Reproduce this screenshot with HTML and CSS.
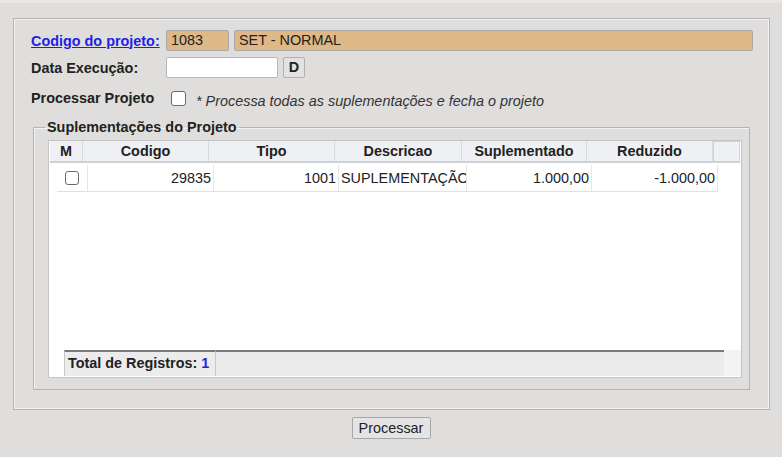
FILE: index.html
```html
<!DOCTYPE html>
<html lang="pt">
<head>
<meta charset="utf-8">
<title>Processar Projeto</title>
<link rel="stylesheet" href="styles.css">
</head>
<body>
<div class="panel">
  <div class="row row1">
    <a class="label link" href="#">Codigo do projeto:</a>
    <div class="inp inp-code">1083</div>
    <div class="inp inp-name">SET - NORMAL</div>
  </div>
  <div class="row row2">
    <span class="label">Data Execução:</span>
    <div class="inp inp-date"></div>
    <div class="btn-d">D</div>
  </div>
  <div class="row row3">
    <span class="label3">Processar Projeto</span>
    <span class="chk chk-main"></span>
    <span class="hint">* Processa todas as suplementações e fecha o projeto</span>
  </div>
  <fieldset class="group">
    <legend>Suplementações do Projeto</legend>
    <div class="grid">
      <div class="ghead">
        <div class="hc c-m">M</div>
        <div class="hc c-col">Codigo</div>
        <div class="hc c-col">Tipo</div>
        <div class="hc c-desc">Descricao</div>
        <div class="hc c-sup">Suplementado</div>
        <div class="hc c-col">Reduzido</div>
        <div class="hc c-blank"></div>
      </div>
      <div class="grow">
        <div class="dc d-m"><span class="chk chk-row"></span></div>
        <div class="dc d-col num">29835</div>
        <div class="dc d-tipo num">1001</div>
        <div class="dc d-desc">SUPLEMENTAÇÃO</div>
        <div class="dc d-sup num">1.000,00</div>
        <div class="dc d-col num">-1.000,00</div>
      </div>
      <div class="spacer"></div>
      <div class="gfoot">
        <div class="ftotal">Total de Registros: <span class="count">1</span></div>
        <div class="frest"></div>
        <div class="fside"></div>
      </div>
    </div>
  </fieldset>
</div>
<div class="actions">
  <button class="btn-main" type="button">Processar</button>
</div>
</body>
</html>
```

FILE: styles.css
```css
* { box-sizing: border-box; }
html, body { margin: 0; padding: 0; }
body {
  background: #e0dedc;
  border-top: 3px solid #e8e7e5;
  padding: 15px 0 0 13px;
  font-family: "Liberation Sans", Arial, sans-serif;
  font-size: 14.4px;
  color: #222;
  width: 782px;
  height: 457px;
  overflow: hidden;
}
.panel {
  width: 757px;
  height: 392px;
  border: 1px solid #b4b4b4;
  box-shadow: inset 1px 1px 0 #f3f3f3, inset -1px -1px 0 #f3f3f3;
  padding: 11px 0 0 17px;
}
.row { display: flex; align-items: center; }
.row1, .row2 { height: 21px; }
.row2 { margin-top: 6px; }
.label {
  width: 135px;
  font-weight: bold;
  color: #222;
}
.link { color: #1f1fe6; text-decoration: underline; }
.inp {
  height: 21px;
  border: 1px solid #a9a9a9;
  border-radius: 2px;
  padding: 0 4px;
  line-height: 19px;
  color: #222;
}
.inp-code { width: 63px; background: #deb887; }
.inp-name { width: 519px; margin-left: 5px; background: #deb887; }
.inp-date { width: 112px; background: #fff; border-color: #b8b8b8; }
.btn-d {
  width: 22px;
  height: 21px;
  margin-left: 5px;
  background: #e2e2e2;
  border: 1px solid #b0b0b0;
  border-radius: 2px;
  font-weight: bold;
  text-align: center;
  line-height: 19px;
}
.row3 { margin-top: 11px; height: 19px; }
.label3 { font-weight: bold; width: 140px; margin-top: -2px; }
.chk {
  display: inline-block;
  width: 15px;
  height: 15px;
  border: 1.5px solid #6b6b78;
  border-radius: 3px;
  background: #fff;
}
.hint {
  margin-left: 10px;
  font-style: italic;
  color: #333;
  margin-top: 4px;
}
.group {
  margin: 11px 0 0 2px;
  width: 717px;
  height: 271px;
  padding: 5px 7px 10px 14px;
  border: 1px solid #b4b4b4;
  box-shadow: inset 1px 1px 0 #f3f3f3;
  min-width: 0;
}
.group legend {
  margin-left: -3px;
  padding: 0 2px;
  font-weight: bold;
  line-height: 16px;
  color: #222;
}
.grid {
  width: 694px;
  height: 238px;
  background: #fff;
  border: 1px solid #c4c4c4;
  display: flex;
  flex-direction: column;
}
.ghead {
  display: flex;
  margin-left: 1px;
  height: 22px;
}
.hc {
  background: #eef0f4;
  border-right: 1px solid #d6d9de;
  border-bottom: 2px solid #cdd0d5;
  font-weight: bold;
  text-align: center;
  line-height: 20px;
  color: #222;
}
.c-m { width: 33px; }
.c-col { width: 126px; }
.c-desc { width: 127px; }
.c-sup { width: 125px; }
.c-blank { width: 27px; border: 1px solid #cfd2d6; border-bottom-width: 2px; }
.grow {
  display: flex;
  margin: 2px 0 0 8px;
  height: 27px;
}
.dc {
  border-right: 1px solid #e6e6e6;
  border-bottom: 1px solid #e0e0e0;
  line-height: 26px;
  white-space: nowrap;
  overflow: hidden;
  color: #222;
}
.num { text-align: right; padding-right: 2px; }
.d-m { width: 31px; display: flex; align-items: center; justify-content: center; }
.chk-row { width: 14px; height: 14px; }
.d-col { width: 126px; }
.d-tipo { width: 125px; }
.d-desc { width: 128px; padding-left: 2px; }
.d-sup { width: 125px; }
.spacer { flex: 1; }
.gfoot {
  display: flex;
  height: 26px;
  margin: 0 0 1px 15px;
}
.ftotal {
  border-top: 2px solid #7a7a7a;
  border-left: 1px solid #c8c8c8;
  border-right: 1px solid #c8c8c8;
  background: #ececec;
  font-weight: bold;
  padding-left: 3px;
  width: 152px;
  line-height: 23px;
  color: #222;
}
.count { color: #2626d9; }
.frest {
  width: 508px;
  background: #ececec;
  border-top: 2px solid #7a7a7a;
}
.fside {
  flex: 1;
  background: #f3f3f3;
}
.actions {
  display: flex;
  justify-content: center;
  margin: 7px 0 0 -13px;
}
.btn-main {
  width: 79px;
  height: 22px;
  background: #e4e4e4;
  border: 1px solid #a8a8a8;
  border-radius: 2px;
  font-family: "Liberation Sans", Arial, sans-serif;
  font-size: 14.4px;
  color: #222;
  padding: 0;
}
```
